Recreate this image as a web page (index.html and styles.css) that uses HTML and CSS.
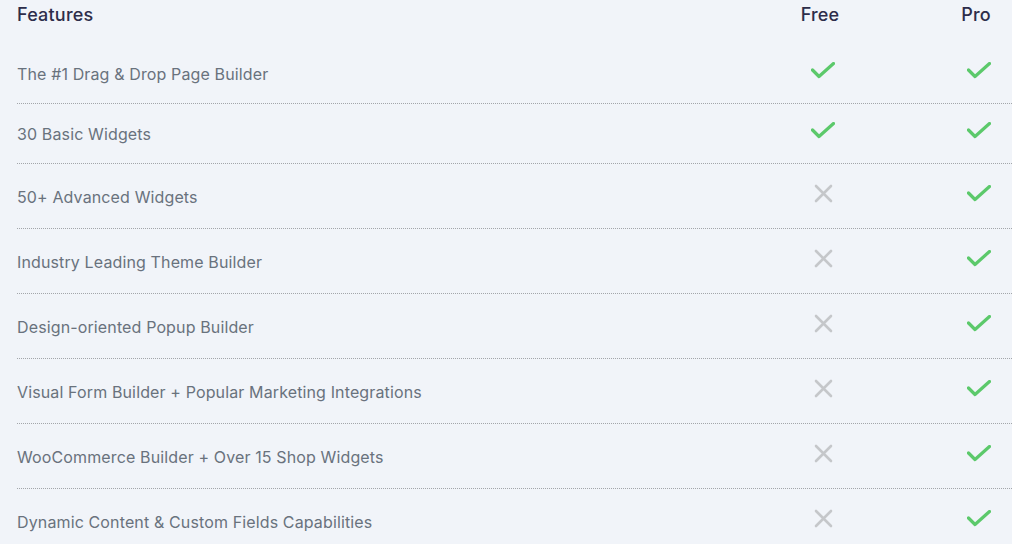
FILE: index.html
```html
<!DOCTYPE html>
<html lang="en">
<head>
<meta charset="utf-8">
<title>Features comparison</title>
<link rel="stylesheet" href="styles.css">
</head>
<body>
<svg width="0" height="0" class="defs">
  <defs>
    <symbol id="check" viewBox="0 0 24 17"><polyline points="1.5,8 8,14.5 22.5,1.5" fill="none" stroke="currentColor" stroke-width="3.2" stroke-linecap="round" stroke-linejoin="round"/></symbol>
    <symbol id="cross" viewBox="0 0 19 19"><path d="M2 2 L17 17 M17 2 L2 17" fill="none" stroke="currentColor" stroke-width="2.6" stroke-linecap="round"/></symbol>
  </defs>
</svg>
<div class="table">
  <div class="row head">
    <div class="name">Features</div>
    <div class="col">Free</div>
    <div class="col">Pro</div>
  </div>
  <div class="row short">
    <div class="name">The #1 Drag &amp; Drop Page Builder</div>
    <div class="col"><svg class="ic yes"><use href="#check"/></svg></div>
    <div class="col"><svg class="ic yes"><use href="#check"/></svg></div>
  </div>
  <div class="row short">
    <div class="name">30 Basic Widgets</div>
    <div class="col"><svg class="ic yes"><use href="#check"/></svg></div>
    <div class="col"><svg class="ic yes"><use href="#check"/></svg></div>
  </div>
  <div class="row">
    <div class="name">50+ Advanced Widgets</div>
    <div class="col"><svg class="ic no"><use href="#cross"/></svg></div>
    <div class="col"><svg class="ic yes"><use href="#check"/></svg></div>
  </div>
  <div class="row">
    <div class="name">Industry Leading Theme Builder</div>
    <div class="col"><svg class="ic no"><use href="#cross"/></svg></div>
    <div class="col"><svg class="ic yes"><use href="#check"/></svg></div>
  </div>
  <div class="row">
    <div class="name">Design-oriented Popup Builder</div>
    <div class="col"><svg class="ic no"><use href="#cross"/></svg></div>
    <div class="col"><svg class="ic yes"><use href="#check"/></svg></div>
  </div>
  <div class="row">
    <div class="name">Visual Form Builder + Popular Marketing Integrations</div>
    <div class="col"><svg class="ic no"><use href="#cross"/></svg></div>
    <div class="col"><svg class="ic yes"><use href="#check"/></svg></div>
  </div>
  <div class="row">
    <div class="name">WooCommerce Builder + Over 15 Shop Widgets</div>
    <div class="col"><svg class="ic no"><use href="#cross"/></svg></div>
    <div class="col"><svg class="ic yes"><use href="#check"/></svg></div>
  </div>
  <div class="row last">
    <div class="name">Dynamic Content &amp; Custom Fields Capabilities</div>
    <div class="col"><svg class="ic no"><use href="#cross"/></svg></div>
    <div class="col"><svg class="ic yes"><use href="#check"/></svg></div>
  </div>
</div>
</body>
</html>
```
FILE: styles.css
```css
html, body {
  margin: 0;
  padding: 0;
  background: #f1f4f9;
}
body {
  font-family: Inter, "Noto Sans", sans-serif;
  overflow: hidden;
}
.defs {
  position: absolute;
  width: 0;
  height: 0;
}
.table {
  padding-left: 17px;
}
.row {
  display: grid;
  grid-template-columns: 1fr 100px 66px;
  column-gap: 73px;
  align-items: start;
  box-sizing: border-box;
  height: 65px;
  padding-top: 21px;
  border-bottom: 1px dotted #a3a6aa;
  font-size: 16px;
  line-height: 24px;
  letter-spacing: 0.13px;
  color: #69727d;
}
.row.short {
  height: 60px;
  padding-top: 18px;
}
.row.head {
  height: 44px;
  padding-top: 3px;
  border-bottom: none;
  font-size: 18px;
  font-weight: 500;
  letter-spacing: 0.2px;
  color: #2d2d4a;
}
.row.head .col {
  padding-right: 6px;
}
.row.last {
  border-bottom: none;
}
.col {
  display: flex;
  justify-content: center;
}
.ic {
  display: block;
}
.ic.yes {
  width: 24px;
  height: 17px;
  color: #5cc96b;
  margin-top: 0;
}
.ic.no {
  width: 19px;
  height: 19px;
  color: #c5c7ca;
  margin-top: -1px;
}
```
